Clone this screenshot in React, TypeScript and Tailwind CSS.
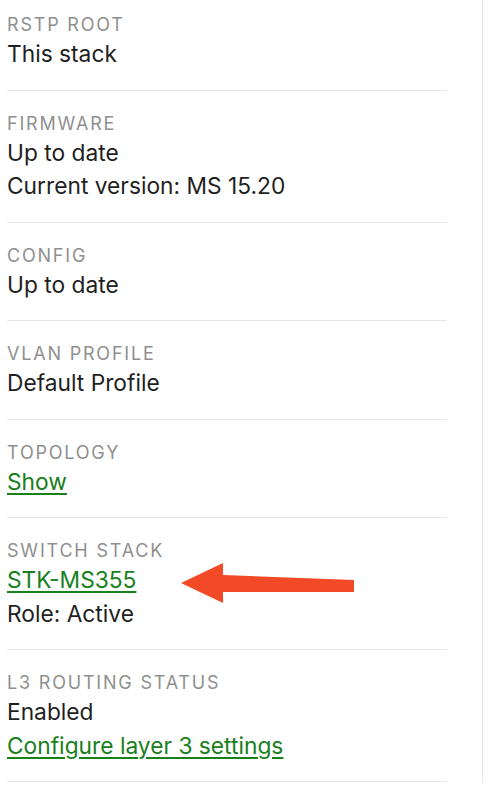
const font = { fontFamily: "Inter, 'Noto Sans', sans-serif" };

type Row = { label: string; lines: { text: string; link?: boolean }[] };

const rows: Row[] = [
  { label: "RSTP ROOT", lines: [{ text: "This stack" }] },
  { label: "FIRMWARE", lines: [{ text: "Up to date" }, { text: "Current version: MS 15.20" }] },
  { label: "CONFIG", lines: [{ text: "Up to date" }] },
  { label: "VLAN PROFILE", lines: [{ text: "Default Profile" }] },
  { label: "TOPOLOGY", lines: [{ text: "Show", link: true }] },
  { label: "SWITCH STACK", lines: [{ text: "STK-MS355", link: true }, { text: "Role: Active" }] },
  {
    label: "L3 ROUTING STATUS",
    lines: [{ text: "Enabled" }, { text: "Configure layer 3 settings", link: true }],
  },
];

function Arrow() {
  return (
    <svg
      className="absolute left-[178px] top-[560px]"
      width="180"
      height="46"
      viewBox="0 0 180 46"
    >
      <path
        d="M3 23 L45 3 L45 15 L176 20 L176 32 L45 32 L45 43 Z"
        fill="#f24a26"
      />
    </svg>
  );
}

export default function App() {
  return (
    <div className="relative h-[791px] w-[498px] overflow-hidden bg-white" style={font}>
      <div className="h-full w-[483px] border-r border-[#e2e2e2] pl-[7px] pr-[35px]">
        <div className="-mt-[8px]">
          {rows.map((row) => (
            <div key={row.label} className="border-b border-[#e6e6e6] pt-[21px] pb-[19px]">
              <p className="text-[18px] leading-[24px] tracking-[0.1em] text-[#8f8f8f]">
                {row.label}
              </p>
              <div>
                {row.lines.map((line) =>
                  line.link ? (
                    <p key={line.text} className="text-[22.75px] leading-[33.5px]">
                      <a className="text-[#18801c] underline decoration-[1.5px] underline-offset-[3px]">
                        {line.text}
                      </a>
                    </p>
                  ) : (
                    <p key={line.text} className="text-[22.75px] leading-[33.5px] text-[#1f1f1f]">
                      {line.text}
                    </p>
                  )
                )}
              </div>
            </div>
          ))}
        </div>
      </div>
      <Arrow />
    </div>
  );
}
